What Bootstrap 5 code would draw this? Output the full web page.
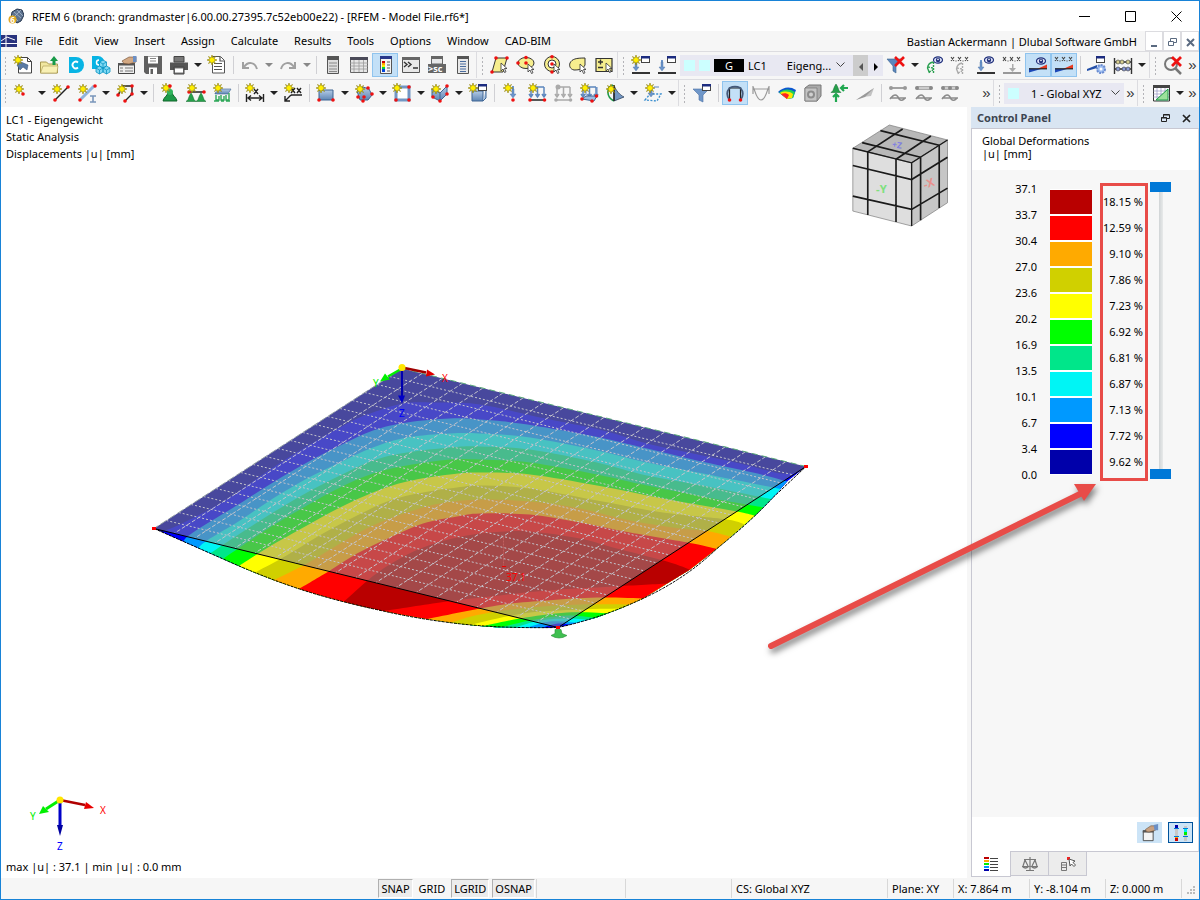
<!DOCTYPE html>
<html lang="en">
<head>
<meta charset="utf-8">
<meta name="viewport" content="width=device-width, initial-scale=1">
<title>RFEM 6</title>
<link href="https://cdn.jsdelivr.net/npm/bootstrap@5.3.0/dist/css/bootstrap.min.css" rel="stylesheet">
<style>
  :root { --edge:#1883d7; --chrome:#f6f6f6; --line:#dcdce0; --frame:#c8c8d2; }
  body { font: 11px/17px "Noto Sans", "Open Sans", sans-serif; color:#000; background:#fff; border:1px solid var(--edge); min-height:100vh; overflow:hidden; }
  button { border:0; background:none; padding:0; color:inherit; line-height:1; }
  a { color:inherit; text-decoration:none; }
  ul { list-style:none; margin:0; padding:0; }
  .titlebar { height:30px; padding-left:7px; }
  .winbtn { width:46px; height:30px; }
  .menubar { height:20px; background:var(--chrome); }
  .menubar .nav-link { padding:0 8px; color:#000; line-height:20px; }
  .mdi { width:18px; height:20px; background:#fff; border:1px solid var(--line); }
  .toolrow { height:28px; background:var(--chrome); border-top:1px solid var(--line); }
  .toolset { height:26px; }
  .toolset + .toolset { border-left:1px solid var(--line); padding-left:1px; }
  .grip { width:9px; height:19px; background:radial-gradient(circle,#b4b4b8 1px,transparent 1px) 0 0/9px 4px; flex:none; }
  .tool { width:26px; height:24px; flex:none; display:flex; align-items:center; justify-content:center; }
  .tool svg { width:20px; height:20px; }
  .tool.active { background:#c3e0f7; box-shadow:inset 0 0 0 1px #90c4ee; }
  .caret { width:12px; height:24px; flex:none; display:flex; align-items:center; justify-content:center; }
  .caret::after { content:""; border:4px solid transparent; border-top-color:#222; border-bottom:0; }
  .caret.dim::after { border-top-color:#888; }
  .vsep { width:1px; height:18px; margin:0 3px; background:#d0d0d4; flex:none; }
  .combo { height:21px; background:#e8e8f2; flex:none; }
  .combo-lc { width:173px; } .combo-cs { width:120px; }
  .combo select { appearance:none; border:0; background:transparent; color:#000; padding:0; height:21px; }
  .chip { width:11px; height:11px; background:#ccffff; }
  .gtag { width:30px; height:13px; line-height:13px; background:#000; color:#fff; text-align:center; }
  .step { width:15px; height:21px; background:#e8e8f2; flex:none; }
  .step.off { background:#cccccc; }
  .more { width:13px; text-align:center; font:15px/20px "Liberation Sans", sans-serif; color:#333; flex:none; }
  .view3d { background:#fff; min-width:0; }
  .scene { width:100%; height:100%; min-height:500px; }
  .caption { left:5px; top:4px; }
  .extrema { left:5px; bottom:3px; }
  .navcube { right:18px; top:17px; width:98px; height:103px; }
  .triad { left:23px; bottom:23px; width:90px; height:64px; }
  .panel { width:232px; flex:none; background:var(--chrome); padding-left:4px; }
  .panelhead { height:21px; background:#d9e5f2; padding-left:6px; font-weight:700; color:#3c4450; }
  .panelbody { border:1px solid var(--frame); border-right-color:#d8d8e0; background:#fff; min-height:0; }
  .paneltitle { height:41px; padding:5px 10px; line-height:13px; }
  .legend { background:#f7f7f7; padding-top:6px; padding-right:27px; }
  .levels li { height:26px; line-height:26px; text-align:right; }
  .shares { border:3px solid #e84c48; padding:3px 2px; width:48px; }
  .shares li { height:26px; line-height:26px; white-space:nowrap; display:flex; justify-content:flex-end; }
  .swatches { margin:0 8px 0 13px; }
  .swatches li { width:42px; height:26px; border-top:1px solid #fff; border-bottom:1px solid #fff; background-clip:padding-box; }
  .span { width:21px; height:297px; margin:0 0 4px 2px; }
  .span input { appearance:none; position:absolute; width:297px; height:21px; left:-138px; top:138px; margin:0; transform:rotate(-90deg); background:none; pointer-events:none; }
  .span input::-webkit-slider-runnable-track { height:21px; background:linear-gradient(#d0d4d6,#e8eaea) center/100% 4px no-repeat; }
  .span input + input::-webkit-slider-runnable-track { background:none; }
  .span input::-webkit-slider-thumb { appearance:none; width:10px; height:21px; background:#0078d7; pointer-events:auto; }
  .panelfoot { height:34px; gap:6px; padding:0 5px 3px 0; }
  .footbtn { width:25px; height:21px; background:#cce4f7; }
  .footbtn.on { border:1px solid #00529b; }
  .tabs { height:26px; }
  .tabs button { width:39px; height:24px; border:1px solid var(--frame); border-top:0; background:#ececec; margin-left:-1px; }
  .tabs button.active { height:26px; background:#fff; margin:-1px 0 0 0; width:40px; }
  .statusbar { height:21px; background:var(--chrome); }
  .statusbar > div { height:19px; border-left:1px solid #d8d8d8; padding-left:4px; line-height:19px; white-space:nowrap; flex:none; }
  .snap { height:19px; padding:0 2px; line-height:16px; border:1px solid transparent; }
  .snap.on { background:#ececec; border-color:#b0b0b0 #fff #fff #b0b0b0; }
  .snaps { gap:3px; margin-right:1px; }
  .w-msg { width:89px; } .w-msg2 { width:106px; } .w-cs { width:156px; } .w-plane { width:66px; } .w-xyz { width:76px; } .w-end { width:18px; }
  .pointer { right:100px; top:373px; width:334px; height:174px; pointer-events:none; filter:drop-shadow(2px 4px 3px rgba(0,0,0,.5)); }
</style>
</head>
<body class="d-flex flex-column">

<svg width="0" height="0" class="position-absolute" aria-hidden="true">
  <defs>
    <linearGradient id="steel" x1="0" y1="0" x2="0" y2="1"><stop offset="0" stop-color="#b4cbe6"/><stop offset="1" stop-color="#5f86b4"/></linearGradient>
    <path id="star" d="M0-5 1-2 3.500-3.500 2-1 5 0 2 1 3.500 3.500 1 2 0 5-1 2-3.500 3.500-2 1-5 0-2-1-3.500-3.500-1-2Z" fill="#ffee00" stroke="#8a7a10" stroke-width=".6"/>
    <circle id="rd" r="1.800" fill="#ee1111"/>
    <path id="cur" d="M0 0v8l2-2 1.500 3.500 1.500-.7L3.500 5.500H6Z" fill="#fff" stroke="#333" stroke-width=".8"/>
    <g id="win"><rect x=".5" y=".5" width="8" height="6" fill="#fff" stroke="#444"/><path d="M0 0h9v2.500H0Z" fill="#1c2c80"/></g>
    <path id="dn" d="M-1-5H1V0H3L0 4-3 0H-1Z" fill="#6c95cb" stroke="#4a6fa5" stroke-width=".4"/>
    <g id="eye"><ellipse rx="4.500" ry="3.200" fill="#dfe4fa" stroke="#20307a" stroke-width="1.200"/><circle r="2.200" fill="#20307a"/><circle r=".8" cy="-.6" fill="#fff"/></g>
    <path id="cone" d="M0-5 1.500-2.500 3 1.500 5 3.500-5 3.500-3 1.500-1.500-2.500Z" fill="#25a04a" stroke="#0e6428" stroke-width=".5"/>
    <g id="bow"><path d="M1 13.500V17.500L13 14Z" fill="#1c48b8"/><path d="M9 14 19 9.500V14Z" fill="#e83a20"/><path d="M1 13.800h18" stroke="#222" stroke-width="1.200"/></g>

    <symbol id="i-new" viewBox="0 0 20 20"><path d="M5.500 2.500h9l4 4V18h-13Z" fill="#fff" stroke="#444"/><path d="M14.500 2.500v4h4" fill="none" stroke="#444"/><path d="M4 10 8 7l7 3-1 5-4-3-3 3Z" fill="#5a7ba5" stroke="#2f4b70" stroke-width=".5"/><use href="#star" x="5" y="5"/></symbol>
    <symbol id="i-open" viewBox="0 0 20 20"><path d="M1.500 7h6l2 2h9v9h-17Z" fill="#f1e7a0" stroke="#a89950"/><path d="M1.500 18 4 11h15l-1 7Z" fill="#f8f0b4" stroke="#a89950" stroke-width=".6"/><path d="M13.500 10V6H11l4-5 4 5h-2.500v4Z" fill="#179a48"/></symbol>
    <symbol id="i-center" viewBox="0 0 20 20"><path d="M4 2h7a8 8 0 0 1 0 16H4Z" fill="#08b4e4"/><path d="M13 7.500a3.300 3.300 0 1 0 0 5" fill="none" stroke="#fff" stroke-width="1.800"/></symbol>
    <symbol id="i-cubes" viewBox="0 0 20 20"><path d="M1 1h6a6 6 0 0 1 0 13H1Z" fill="#08b4e4"/><path d="M8 5a2.500 2.500 0 1 0 0 5" fill="none" stroke="#fff" stroke-width="1.500"/><g fill="#7fd8f2" stroke="#0a94c4" stroke-width=".8"><path d="m12 5 3.500 2v4L12 13 8.500 11V7ZM8.500 11l3.500 2v4l-3.500 2L5 17v-4ZM15.500 11l3.500 2v4l-3.500 2-3.500-2v-4Z"/><path d="m8.500 7 3.500 2 3.500-2M12 9v4M5 13l3.500 2 3.500-2 3.500 2 3.500-2M8.500 15v4M15.500 15v4" fill="none"/></g></symbol>
    <symbol id="i-props" viewBox="0 0 20 20"><path d="M1.500 8.500h16v10h-16Z" fill="#eee" stroke="#444"/><path d="M1 8h17v2.500H1Z" fill="#555"/><path d="M3 13h3m2 0h8M3 16h3m2 0h8" stroke="#777" stroke-width="1.200"/><path d="M5 6 12 2h7v5l-7 2-5-.5Z" fill="#d2a883" stroke="#6e4c33" stroke-width=".6"/><path d="M16 1h3.500v6H16Z" fill="#6b8fc4"/></symbol>
    <symbol id="i-save" viewBox="0 0 20 20"><path d="M1 1h18v18H3l-2-2Z" fill="#606060"/><path d="M5 1.500h10v7H5ZM6 12.500h8V19H6Z" fill="#fff"/><path d="M7 3.500h6M7 6h6" stroke="#888"/><path d="M7.500 14H10v5H7.500Z" fill="#606060"/></symbol>
    <symbol id="i-print" viewBox="0 0 20 20"><path d="M1 7.500h18V15H1Z" fill="#555"/><path d="M5 1.500h10V7H5ZM5 12h10v7H5Z" fill="#777" stroke="#444"/><path d="M6 13.500h8v4H6Z" fill="#fff"/></symbol>
    <symbol id="i-report" viewBox="0 0 20 20"><path d="M5.500 1.500h8l4 4V18h-12Z" fill="#fff" stroke="#555"/><path d="M13 2v4h4M7 8.500h8M7 11.500h8M7 14.500h8" fill="none" stroke="#555" stroke-width="1.200"/><use href="#star" x="5" y="5"/></symbol>
    <symbol id="i-undo" viewBox="0 0 20 20"><path d="M3 7v6h6M4 12c4-6 11-5 13 2" fill="none" stroke="#a0a0a0" stroke-width="2"/></symbol>
    <symbol id="i-redo" viewBox="0 0 20 20"><path d="M17 7v6h-6M16 12C12 6 5 7 3 14" fill="none" stroke="#a0a0a0" stroke-width="2"/></symbol>
    <symbol id="i-list" viewBox="0 0 20 20"><path d="M4.500 1.500h11v17h-11Z" fill="#ddd" stroke="#555"/><path d="M4 1h12v4H4Z" fill="#555"/><path d="M6 8h8M6 11h8M6 14h8M6 16.500h8" stroke="#888"/></symbol>
    <symbol id="i-table" viewBox="0 0 20 20"><path d="M1.500 2.500h17v15h-17Z" fill="#e6e6e6" stroke="#666"/><path d="M1 2h18v3H1Z" fill="#4a4a58"/><path d="M1 8h18M1 11h18M1 14h18M5 5v12M10 5v12M14.500 5v12" stroke="#999" stroke-width=".8"/></symbol>
    <symbol id="i-panel" viewBox="0 0 20 20"><path d="M5.500 1.500h11v17h-11Z" fill="#f4f4f4" stroke="#555"/><path d="M5 1h12v3H5Z" fill="#28388a"/><path d="M7 6h3v2H7Z" fill="#c00"/><path d="M7 8h3v2H7Z" fill="#fa0"/><path d="M7 10h3v2H7Z" fill="#fe0"/><path d="M7 12h3v2H7Z" fill="#0c4"/><path d="M7 14h3v3H7Z" fill="#04d"/><path d="M12 7h3M12 10h3M12 13h3M12 16h3" stroke="#555"/></symbol>
    <symbol id="i-console" viewBox="0 0 20 20"><path d="M1.500 2.500h17v15h-17Z" fill="#e8e8e8" stroke="#555"/><path d="M1 2h18v3H1Z" fill="#666"/><path d="m3 7 3 2.500L3 12m4-5 3 2.500L7 12m5 1h5" fill="none" stroke="#333" stroke-width="1.400"/></symbol>
    <symbol id="i-script" viewBox="0 0 20 20"><path d="M4.500 1.500h11V9h-11Z" fill="#e8e8e8" stroke="#666"/><path d="M4 1h12v3H4ZM1 9h18v9H1Z" fill="#666"/><text x="1" y="16.500" font-size="9" font-weight="700" fill="#fff">&gt;sc</text></symbol>
    <symbol id="i-doc" viewBox="0 0 20 20"><path d="M4.500 1.500h11v17h-11Z" fill="#e8e8e8" stroke="#555"/><path d="M4 1h12v3H4Z" fill="#555"/><path d="M7 6.500h6M7 9h6M7 11.500h6M7 14h6M7 16.500h6" stroke="#4a6da0"/></symbol>
    <symbol id="i-selrh" viewBox="0 0 20 20"><path d="M2 17 6 3h11l-4 14Z" fill="#f6ee8e" stroke="#333"/><g><use href="#rd" x="2" y="17"/><use href="#rd" x="6" y="3"/><use href="#rd" x="17" y="3"/></g><use href="#cur" x="11" y="8"/></symbol>
    <symbol id="i-selel" viewBox="0 0 20 20"><ellipse cx="10" cy="8" rx="8" ry="5.500" fill="#f6ee8e" stroke="#333"/><g><use href="#rd" x="2" y="8"/><use href="#rd" x="10" y="2.500"/><use href="#rd" x="10" y="8"/></g><use href="#cur" x="12" y="9"/></symbol>
    <symbol id="i-selring" viewBox="0 0 20 20"><circle cx="10" cy="9" r="7.500" fill="#f6ee8e" stroke="#333"/><circle cx="10" cy="9" r="4" fill="#fff" stroke="#333"/><g><use href="#rd" x="10" y="9"/><use href="#rd" x="10" y="1.800"/><use href="#rd" x="10" y="17"/></g><use href="#cur" x="12" y="9"/></symbol>
    <symbol id="i-selfree" viewBox="0 0 20 20"><path d="M2 8c2-4 6-5 15-5v7c-2 4-5 5-11 5-4-1-5-4-4-7Z" fill="#f6ee8e" stroke="#333"/><use href="#cur" x="12" y="9"/></symbol>
    <symbol id="i-selpm" viewBox="0 0 20 20"><path d="M2 3.500h16v13H2Z" fill="#f6ee8e" stroke="#333" stroke-width="1.200"/><path d="M4 7h5M6.500 4.500v5M4 12.500h5" stroke="#333" stroke-width="1.400"/><use href="#cur" x="12" y="8"/></symbol>
    <symbol id="i-loadnew" viewBox="0 0 20 20"><path d="M1 18h18" stroke="#333" stroke-width="2"/><use href="#dn" x="5" y="12"/><path d="M5 5v4" stroke="#4a6fa5" stroke-width="2"/><use href="#star" x="5" y="5"/><use href="#win" x="10" y="1"/></symbol>
    <symbol id="i-load" viewBox="0 0 20 20"><path d="M1 18h18" stroke="#333" stroke-width="2"/><path d="M5 5v8" stroke="#6c95cb" stroke-width="2"/><use href="#dn" x="5" y="12"/><use href="#win" x="10" y="1"/></symbol>
    <symbol id="i-nofilter" viewBox="0 0 20 20"><path d="M1 4h15l-6 7v7l-3-2v-5Z" fill="#5b86bd" stroke="#3d648f" stroke-width=".6"/><path d="m9 2 9 9m0-9-9 9" stroke="#ee1111" stroke-width="2.600"/></symbol>
    <g id="sup" fill="none" stroke-width="1.400"><path d="M9 7Q4 8 3.500 13l2 5"/><path d="M9.500 7v11M4 12l5 1M5 17l4-2" stroke-dasharray="2 1"/></g>
    <symbol id="i-eyesup" viewBox="0 0 20 20"><use href="#sup" stroke="#2aa050"/><use href="#eye" x="14" y="5"/></symbol>
    <g id="xxx" stroke="#444" stroke-width="1.100"><path d="m1 2 3 4m0-4-3 4m7-4 3 4m0-4-3 4m7-4 3 4m0-4-3 4M5.500 6h1M12.500 6h1"/></g>
    <symbol id="i-xsup" viewBox="0 0 20 20"><use href="#xxx"/><use href="#sup" x="3" y="1" stroke="#aaa"/></symbol>
    <symbol id="i-eyeload" viewBox="0 0 20 20"><path d="M1 18h18" stroke="#333" stroke-width="2"/><path d="M5 5v8" stroke="#6c95cb" stroke-width="2"/><use href="#dn" x="5" y="12"/><use href="#eye" x="13" y="5"/></symbol>
    <symbol id="i-xload" viewBox="0 0 20 20"><use href="#xxx"/><path d="M1 18h18" stroke="#999" stroke-width="2"/><path d="M10 9v4H7l3.500 4 3.500-4h-2.500V9Z" fill="#aaa"/></symbol>
    <symbol id="i-eyeres" viewBox="0 0 20 20"><use href="#bow"/><use href="#eye" x="13" y="6"/></symbol>
    <symbol id="i-xres" viewBox="0 0 20 20"><use href="#bow"/><use href="#xxx"/></symbol>
    <symbol id="i-resset" viewBox="0 0 20 20"><path d="M0 14 10 10v3L0 16Z" fill="#2450a8"/><use href="#win" x="9" y="1"/><circle cx="14" cy="14" r="4" fill="#9cbcf0" stroke="#6a8cd0" stroke-width="2" stroke-dasharray="2 1"/><circle cx="14" cy="14" r="1.500" fill="#fff"/></symbol>
    <symbol id="i-abacus" viewBox="0 0 20 20"><path d="M1.500 3v16M18.500 3v16M1 7h18M1 14h18" stroke="#333" stroke-width="1.400"/><g fill="#d8cf90" stroke="#333" stroke-width=".6"><circle cx="5" cy="7" r="2"/><circle cx="9" cy="7" r="2"/><circle cx="15" cy="7" r="2"/></g><g fill="#8a9ad8" stroke="#333" stroke-width=".6"><circle cx="5" cy="14" r="2"/><circle cx="11" cy="14" r="2"/><circle cx="15" cy="14" r="2"/></g></symbol>
    <symbol id="i-noview" viewBox="0 0 20 20"><circle cx="8" cy="9" r="6" fill="none" stroke="#777" stroke-width="2"/><path d="m12 13 6 6" stroke="#777" stroke-width="2.500"/><path d="m9 2 9 9m0-9-9 9" stroke="#ee1111" stroke-width="2.800"/></symbol>

    <symbol id="i-node" viewBox="0 0 20 20"><use href="#star" x="6" y="6"/><use href="#rd" x="10" y="11"/></symbol>
    <symbol id="i-line" viewBox="0 0 20 20"><path d="M4 17 17 4" stroke="#222" stroke-width="1.400"/><use href="#rd" x="4" y="17"/><use href="#rd" x="17" y="4"/><use href="#star" x="6" y="6"/></symbol>
    <symbol id="i-member" viewBox="0 0 20 20"><path d="M4 16 17 3" stroke="#8fb4de" stroke-width="3"/><use href="#rd" x="3" y="17"/><use href="#rd" x="18" y="3"/><use href="#star" x="6" y="6"/><path d="M13 13h6M16 13v6M13 19h6" stroke="#7a96bb" stroke-width="1.600"/></symbol>
    <symbol id="i-poly" viewBox="0 0 20 20"><path d="M7 3h10v8l-7 7M5 9l-2 3" fill="none" stroke="#222" stroke-width="1.400"/><use href="#rd" x="17" y="3"/><use href="#rd" x="17" y="11"/><use href="#rd" x="10" y="18"/><use href="#rd" x="3" y="12"/><use href="#star" x="7" y="6"/></symbol>
    <symbol id="i-nsup" viewBox="0 0 20 20"><path d="M3 18c1-4 4-5 5-8h4c1 3 4 4 5 8Z" fill="#1d9a48" stroke="#0e6428"/><circle cx="10" cy="9" r="3" fill="#2fb45c"/><use href="#star" x="6" y="5"/><use href="#rd" x="10" y="3"/></symbol>
    <symbol id="i-lsup" viewBox="0 0 20 20"><use href="#cone" x="5" y="15"/><use href="#cone" x="15" y="15"/><path d="M2 9h16" stroke="#222" stroke-width="1.500"/><use href="#rd" x="3" y="9"/><use href="#rd" x="18" y="9"/><use href="#star" x="6" y="5"/></symbol>
    <symbol id="i-ssup" viewBox="0 0 20 20"><path d="M3 10 8 6h11l-3 5H3Z" fill="url(#steel)" stroke="#3f6593" stroke-width=".6"/><path d="M4 12v5h3v-4M9 12v5h3v-4M14 12v5h3v-7M2 18h5m2 0h3m2 0h4" fill="none" stroke="#2fa85a" stroke-width="1.400"/><use href="#star" x="6" y="5"/></symbol>
    <symbol id="i-dim" viewBox="0 0 20 20"><path d="M1.500 11v8M18.500 11v8M3 15h14M6 12.500 3 15l3 2.500M14 12.500l3 2.500-3 2.500M9 6l4 5m0-5-4 5" fill="none" stroke="#222" stroke-width="1.400"/><use href="#star" x="5" y="5"/></symbol>
    <symbol id="i-dimxx" viewBox="0 0 20 20"><path d="M8 12h11M8 12l-6 6m0-5v5h5M8 5l4 5m0-5-4 5m6-5 4 5m0-5-4 5" fill="none" stroke="#222" stroke-width="1.400"/><use href="#star" x="6" y="5"/></symbol>
    <symbol id="i-surf" viewBox="0 0 20 20"><path d="M3 7h14v10H3Z" fill="url(#steel)" stroke="#3f6593"/><use href="#rd" x="3" y="17"/><use href="#rd" x="17" y="17"/><use href="#star" x="5" y="5"/></symbol>
    <symbol id="i-solid" viewBox="0 0 20 20"><path d="M3 8 9 4l6 2 3 6-4 5H6Z" fill="url(#steel)" stroke="#3f6593"/><use href="#rd" x="14" y="5"/><use href="#rd" x="18" y="11"/><use href="#rd" x="10" y="14"/><use href="#rd" x="4" y="14"/><use href="#rd" x="9" y="18"/><use href="#star" x="6" y="6"/></symbol>
    <symbol id="i-opening" viewBox="0 0 20 20"><path d="M4 4h13v13H4Z" fill="#fff" stroke="#7397c4" stroke-width="3"/><use href="#rd" x="17" y="4"/><use href="#rd" x="17" y="17"/><use href="#rd" x="4" y="17"/><use href="#star" x="5" y="5"/></symbol>
    <symbol id="i-fold" viewBox="0 0 20 20"><path d="M2 6 10 10l7-7v8l-7 7-8-4Z" fill="url(#steel)" stroke="#3f6593"/><path d="M10 10v8" stroke="#3f6593"/><use href="#rd" x="17" y="3"/><use href="#rd" x="17" y="11"/><use href="#rd" x="10" y="18"/><use href="#rd" x="3" y="14"/><use href="#star" x="6" y="6"/></symbol>
    <symbol id="i-box" viewBox="0 0 20 20"><path d="M4 8h11v10H4Z" fill="url(#steel)" stroke="#3f6593"/><path d="m4 8 3-3h11l-3 3m0 10 3-3V6" fill="#a8c4e4" stroke="#3f6593"/><use href="#win" x="10" y="1"/><use href="#star" x="5" y="5"/></symbol>
    <symbol id="i-nload" viewBox="0 0 20 20"><path d="M12 3v8" stroke="#6c95cb" stroke-width="2"/><use href="#dn" x="12" y="11"/><use href="#rd" x="12" y="17"/><use href="#star" x="7" y="5"/></symbol>
    <g id="pins"><path d="M4 4h13M4 4v8m6.500-8v8M17 4v8M2 11l2 3 2-3m2.500 0 2 3 2-3m2.500 0 2 3 2-3" fill="none" stroke-width="1.500"/></g>
    <symbol id="i-mload" viewBox="0 0 20 20"><use href="#pins" stroke="#5c86bd"/><path d="M3 17h15" stroke="#222" stroke-width="1.500"/><use href="#rd" x="3" y="17"/><use href="#rd" x="17.500" y="17"/><use href="#star" x="6" y="5"/></symbol>
    <symbol id="i-gload" viewBox="0 0 20 20"><use href="#pins" stroke="#aaa"/><path d="M3 17h15" stroke="#aaa" stroke-width="1.500"/><g fill="#aaa"><circle cx="3" cy="17" r="1.800"/><circle cx="17.500" cy="17" r="1.800"/><circle cx="5" cy="4" r="2.500"/></g></symbol>
    <symbol id="i-sload" viewBox="0 0 20 20"><use href="#pins" stroke="#5c86bd"/><path d="M3 16 7 13h11l-3 5Z" fill="#9bbbe0" stroke="#3f6593"/><path d="M7 4v8m11-8v9" stroke="#5c86bd"/><use href="#rd" x="3" y="16"/><use href="#rd" x="17.500" y="13"/><use href="#rd" x="13" y="18"/><use href="#star" x="6" y="5"/></symbol>
    <symbol id="i-imp" viewBox="0 0 20 20"><path d="M8 2C1 4 1 14 9 18" fill="none" stroke="#1d9a48" stroke-width="1.600"/><path d="M9 2v16l10-4c-4-2-8-6-10-12Z" fill="#7397c4" stroke="#2d4260" stroke-width=".8"/><path d="M9 2v16" stroke="#222" stroke-width="1.500"/><use href="#star" x="6" y="6"/></symbol>
    <symbol id="i-free" viewBox="0 0 20 20"><path d="M2 17 7 11h11l-4 7Z" fill="none" stroke="#3b8fd0" stroke-width="1.300" stroke-dasharray="2 1.500"/><use href="#dn" x="8" y="10"/><use href="#star" x="7" y="5"/><path d="M11 4h5" stroke="#5c86bd"/></symbol>
    <symbol id="i-filter" viewBox="0 0 20 20"><path d="M1 6h16l-6 6v7l-4-2v-5Z" fill="#6f97c9" stroke="#4a6fa5" stroke-width=".6"/><use href="#win" x="10" y="1"/></symbol>
    <symbol id="i-deform" viewBox="0 0 20 20"><path d="M4.500 17V5h11v12" fill="none" stroke="#222" stroke-width="1.200"/><path d="M4.500 17C1 12 2 8 4.500 5c4-2 7-2 11 0C18 8 19 12 15.500 17" fill="none" stroke="#44597a" stroke-width="1.800"/><use href="#rd" x="4.500" y="17"/><use href="#rd" x="15.500" y="17"/></symbol>
    <symbol id="i-moment" viewBox="0 0 20 20"><path d="M2 3v8M18 3v8M2 6h16M2 4c2 2 3 13 8 13s6-11 8-13" fill="none" stroke="#999" stroke-width="1.200"/></symbol>
    <symbol id="i-iso" viewBox="0 0 20 20"><path d="M1 9C6 4 13 3 19 7l-3 8-6 1Z" fill="#0b57d0"/><path d="M2 9.500C7 6 12 5 18 9l-2 6-6 1Z" fill="#1fcf5a"/><path d="M3 10c4-2 9-2 13 1l-1 4-5 1Z" fill="#ffe600"/><path d="M4 11c3-1 6-1 8 1l-2 4Z" fill="#f22"/></symbol>
    <symbol id="i-cubeg" viewBox="0 0 20 20"><path d="m2 5 4-3h12v11l-4 5H2Z" fill="#aaa" stroke="#777"/><path d="M2 5h12v13H2Z" fill="#c4c4c4" stroke="#777" stroke-width=".7"/><circle cx="8" cy="11.500" r="4" fill="#8c8c8c"/><circle cx="8" cy="11.500" r="2" fill="#d0d0d0"/></symbol>
    <symbol id="i-react" viewBox="0 0 20 20"><use href="#cone" x="7" y="6"/><path d="M12 5h7M15 2l-3 3 3 3M7 19v-7M4 14l3-3 3 3" fill="none" stroke="#20a850" stroke-width="2.200"/></symbol>
    <symbol id="i-knife" viewBox="0 0 20 20"><path d="M1 17 19 5l-3 8-8 1Z" fill="#c2c2c2"/><path d="M1 17 19 5l-9 9Z" fill="#999"/></symbol>
    <g id="wave" fill="none" stroke="#8c8c8c" stroke-width="1.600"><path d="M2 15h16M2 16q6-8 9 0 3 3 6-1"/></g>
    <symbol id="i-w1" viewBox="0 0 20 20"><path d="M3 5h14" stroke="#8c8c8c" stroke-width="1.600"/><circle cx="3" cy="5" r="2" fill="#999"/><circle cx="17" cy="5" r="2" fill="#999"/><use href="#wave"/></symbol>
    <symbol id="i-w2" viewBox="0 0 20 20"><path d="M3 3.500h14v3H3Z" fill="#ccc" stroke="#aaa"/><circle cx="3" cy="5" r="2" fill="#888"/><circle cx="17" cy="5" r="2" fill="#888"/><use href="#wave"/></symbol>
    <symbol id="i-w3" viewBox="0 0 20 20"><path d="M3 3.500h14v3H3Z" fill="#ccc" stroke="#aaa"/><g fill="#888"><circle cx="3" cy="5" r="2"/><circle cx="10" cy="5" r="2"/><circle cx="17" cy="5" r="2"/></g><use href="#wave"/></symbol>
    <symbol id="i-plane" viewBox="0 0 20 20"><path d="M2.500 3h16v15h-16Z" fill="#fff" stroke="#333"/><path d="M2 2h17v3H2Z" fill="#444"/><path d="M2 8h16M2 11h16M2 14h16M6 5v13M10 5v13M14 5v13" stroke="#88b" stroke-width=".6"/><path d="M5 17 17 6v11Z" fill="#9be29b" stroke="#1d9a48"/></symbol>
  </defs>
</svg>

<header class="titlebar d-flex align-items-center">
  <svg width="16" height="16" viewBox="0 0 16 16" aria-hidden="true"><path d="M4 4 9 1l5 1 2 5-3 6-4 2-6-5Z" fill="#5d7390" stroke="#24344c"/><path d="m6 4 7 6M9 2l6 6M4 7l6 6M13 2 5 10" stroke="#a8b8cc" stroke-width=".8"/><circle cx="4.500" cy="11.500" r="4" fill="#e0a820"/><text x="2.300" y="14.500" font-size="8" font-weight="700" fill="#fff">6</text></svg>
  <span class="ms-2">RFEM 6 (branch: grandmaster|6.00.00.27395.7c52eb00e22) - [RFEM - Model File.rf6*]</span>
  <div class="ms-auto d-flex">
    <button class="winbtn" aria-label="Minimize"><svg width="11" height="11" viewBox="0 0 11 11"><path d="M0 5.500h11" stroke="#000"/></svg></button>
    <button class="winbtn" aria-label="Maximize"><svg width="11" height="11" viewBox="0 0 11 11"><path d="M.5.5h10v10H.5Z" fill="none" stroke="#000"/></svg></button>
    <button class="winbtn" aria-label="Close"><svg width="11" height="11" viewBox="0 0 11 11"><path d="m.5.5 10 10m0-10-10 10" stroke="#000"/></svg></button>
  </div>
</header>

<nav class="menubar d-flex align-items-center">
  <svg width="16" height="12" viewBox="0 0 16 12" aria-hidden="true"><path d="M0 0h16v12H0Z" fill="#29337e"/><path d="M0 6 6 2l8 3M5 0v12M0 8.500h16" fill="none" stroke="#fff"/></svg>
  <ul class="nav flex-nowrap">
    <li><a class="nav-link" href="#">File</a></li><li><a class="nav-link" href="#">Edit</a></li><li><a class="nav-link" href="#">View</a></li><li><a class="nav-link" href="#">Insert</a></li><li><a class="nav-link" href="#">Assign</a></li><li><a class="nav-link" href="#">Calculate</a></li><li><a class="nav-link" href="#">Results</a></li><li><a class="nav-link" href="#">Tools</a></li><li><a class="nav-link" href="#">Options</a></li><li><a class="nav-link" href="#">Window</a></li><li><a class="nav-link" href="#">CAD-BIM</a></li>
  </ul>
  <span class="ms-auto me-2">Bastian Ackermann | Dlubal Software GmbH</span>
  <button class="mdi" aria-label="Minimize document"><svg width="8" height="8" viewBox="0 0 8 8"><path d="M1 7h6" stroke="#5a6a80" stroke-width="2"/></svg></button>
  <button class="mdi" aria-label="Restore document"><svg width="9" height="9" viewBox="0 0 9 9"><path d="M2.500 3V.5h6v4H6M.5 3.500h5v4h-5Z" fill="none" stroke="#5a6a80"/></svg></button>
  <button class="mdi" aria-label="Close document"><svg width="9" height="9" viewBox="0 0 9 9"><path d="m1 1 7 7m0-7L1 8" stroke="#5a6a80" stroke-width="2"/></svg></button>
</nav>

<div class="toolrow d-flex" role="toolbar" aria-label="Main tools">
  <div class="toolset d-flex align-items-center">
    <span class="grip"></span>
    <button class="tool" aria-label="New"><svg><use href="#i-new"/></svg></button><button class="tool" aria-label="Open"><svg><use href="#i-open"/></svg></button><button class="tool" aria-label="Dlubal Center"><svg><use href="#i-center"/></svg></button><button class="tool" aria-label="Block manager"><svg><use href="#i-cubes"/></svg></button><button class="tool" aria-label="Model data"><svg><use href="#i-props"/></svg></button><button class="tool" aria-label="Save"><svg><use href="#i-save"/></svg></button><button class="tool" aria-label="Print"><svg><use href="#i-print"/></svg></button><button class="caret" aria-label="Print options"></button><button class="tool" aria-label="New report"><svg><use href="#i-report"/></svg></button>
    <span class="vsep"></span>
    <button class="tool" aria-label="Undo"><svg><use href="#i-undo"/></svg></button><button class="caret dim" aria-label="Undo list"></button><button class="tool" aria-label="Redo"><svg><use href="#i-redo"/></svg></button><button class="caret dim" aria-label="Redo list"></button>
    <span class="vsep"></span>
    <button class="tool" aria-label="Navigator"><svg><use href="#i-list"/></svg></button><button class="tool" aria-label="Tables"><svg><use href="#i-table"/></svg></button><button class="tool active" aria-label="Control panel"><svg><use href="#i-panel"/></svg></button><button class="tool" aria-label="Console"><svg><use href="#i-console"/></svg></button><button class="tool" aria-label="Scripts"><svg><use href="#i-script"/></svg></button><button class="tool" aria-label="Log"><svg><use href="#i-doc"/></svg></button>
  </div>
  <div class="toolset d-flex align-items-center">
    <span class="grip"></span>
    <button class="tool" aria-label="Select by rhomboid"><svg><use href="#i-selrh"/></svg></button><button class="tool" aria-label="Select by ellipse"><svg><use href="#i-selel"/></svg></button><button class="tool" aria-label="Select by ring"><svg><use href="#i-selring"/></svg></button><button class="tool" aria-label="Select freehand"><svg><use href="#i-selfree"/></svg></button><button class="tool" aria-label="Add or remove selection"><svg><use href="#i-selpm"/></svg></button>
  </div>
  <div class="toolset d-flex align-items-center flex-grow-1">
    <span class="grip"></span>
    <button class="tool" aria-label="New load case"><svg><use href="#i-loadnew"/></svg></button><button class="tool" aria-label="Load cases"><svg><use href="#i-load"/></svg></button>
    <div class="combo combo-lc d-flex align-items-center ps-1">
      <span class="chip me-1"></span><span class="chip me-1"></span><span class="gtag me-1">G</span><span class="me-3">LC1</span>
      <select class="ms-1" aria-label="Load case"><option>Eigeng...</option></select>
      <svg class="ms-auto me-2" width="9" height="6" viewBox="0 0 9 6"><path d="m.5.5 4 4 4-4" fill="none" stroke="#444"/></svg>
    </div>
    <button class="step off" aria-label="Previous"><svg width="4" height="8" viewBox="0 0 4 8"><path d="M4 0v8L0 4Z" fill="#555"/></svg></button><button class="step" aria-label="Next"><svg width="4" height="8" viewBox="0 0 4 8"><path d="M0 0v8l4-4Z"/></svg></button>
    <button class="tool" aria-label="Remove filter"><svg><use href="#i-nofilter"/></svg></button><button class="caret" aria-label="Filter options"></button><button class="tool" aria-label="Show supports"><svg><use href="#i-eyesup"/></svg></button><button class="tool" aria-label="Support values"><svg><use href="#i-xsup"/></svg></button><button class="tool" aria-label="Show loads"><svg><use href="#i-eyeload"/></svg></button><button class="tool" aria-label="Load values"><svg><use href="#i-xload"/></svg></button><button class="tool active" aria-label="Show results"><svg><use href="#i-eyeres"/></svg></button><button class="tool active" aria-label="Result values"><svg><use href="#i-xres"/></svg></button>
    <span class="vsep"></span>
    <button class="tool" aria-label="Result settings"><svg><use href="#i-resset"/></svg></button><button class="tool" aria-label="Calculate"><svg><use href="#i-abacus"/></svg></button><button class="caret" aria-label="Calculate options"></button>
  </div>
  <div class="toolset d-flex align-items-center">
    <span class="grip"></span><button class="tool" aria-label="Reset zoom"><svg><use href="#i-noview"/></svg></button><button class="more" aria-label="More tools">»</button>
  </div>
</div>

<div class="toolrow d-flex" role="toolbar" aria-label="Modelling tools">
  <div class="toolset d-flex align-items-center">
    <span class="grip"></span>
    <button class="tool" aria-label="New node"><svg><use href="#i-node"/></svg></button><button class="caret" aria-label="Node types"></button><button class="tool" aria-label="New line"><svg><use href="#i-line"/></svg></button><button class="tool" aria-label="New member"><svg><use href="#i-member"/></svg></button><button class="caret" aria-label="Member types"></button><button class="tool" aria-label="New polyline"><svg><use href="#i-poly"/></svg></button><button class="caret" aria-label="Polyline types"></button>
    <span class="vsep"></span>
    <button class="tool" aria-label="Nodal support"><svg><use href="#i-nsup"/></svg></button><button class="tool" aria-label="Line support"><svg><use href="#i-lsup"/></svg></button><button class="tool" aria-label="Surface support"><svg><use href="#i-ssup"/></svg></button>
    <span class="vsep"></span>
    <button class="tool" aria-label="Dimension"><svg><use href="#i-dim"/></svg></button><button class="caret" aria-label="Dimension types"></button><button class="tool" aria-label="Note"><svg><use href="#i-dimxx"/></svg></button>
    <span class="vsep"></span>
    <button class="tool" aria-label="New surface"><svg><use href="#i-surf"/></svg></button><button class="caret" aria-label="Surface types"></button><button class="tool" aria-label="New solid"><svg><use href="#i-solid"/></svg></button><button class="caret" aria-label="Solid types"></button><button class="tool" aria-label="New opening"><svg><use href="#i-opening"/></svg></button><button class="caret" aria-label="Opening types"></button><button class="tool" aria-label="New folded surface"><svg><use href="#i-fold"/></svg></button><button class="caret" aria-label="Folded types"></button><button class="tool" aria-label="New block"><svg><use href="#i-box"/></svg></button>
    <span class="vsep"></span>
    <button class="tool" aria-label="Nodal load"><svg><use href="#i-nload"/></svg></button><button class="tool" aria-label="Member load"><svg><use href="#i-mload"/></svg></button><button class="tool" aria-label="Line load"><svg><use href="#i-gload"/></svg></button><button class="tool" aria-label="Surface load"><svg><use href="#i-sload"/></svg></button><button class="tool" aria-label="Imperfection"><svg><use href="#i-imp"/></svg></button><button class="caret" aria-label="Imperfection types"></button><button class="tool" aria-label="Free load"><svg><use href="#i-free"/></svg></button><button class="caret" aria-label="Free load types"></button>
  </div>
  <div class="toolset d-flex align-items-center flex-grow-1">
    <span class="grip"></span>
    <button class="tool" aria-label="Filter"><svg><use href="#i-filter"/></svg></button>
    <span class="vsep"></span>
    <button class="tool active" aria-label="Deformations"><svg><use href="#i-deform"/></svg></button><button class="tool" aria-label="Line results"><svg><use href="#i-moment"/></svg></button><button class="tool" aria-label="Surface results"><svg><use href="#i-iso"/></svg></button><button class="tool" aria-label="Solid results"><svg><use href="#i-cubeg"/></svg></button><button class="tool" aria-label="Reactions"><svg><use href="#i-react"/></svg></button><button class="tool" aria-label="Sections"><svg><use href="#i-knife"/></svg></button>
    <span class="vsep"></span>
    <button class="tool" aria-label="Diagram on line"><svg><use href="#i-w1"/></svg></button><button class="tool" aria-label="Diagram on member"><svg><use href="#i-w2"/></svg></button><button class="tool" aria-label="Diagram on set"><svg><use href="#i-w3"/></svg></button>
    <button class="more ms-auto" aria-label="More results">»</button>
  </div>
  <div class="toolset d-flex align-items-center">
    <span class="grip"></span>
    <div class="combo combo-cs d-flex align-items-center ps-1">
      <span class="chip me-2"></span>
      <select class="ms-1" aria-label="Coordinate system"><option>1 - Global XYZ</option></select>
      <svg class="ms-auto me-1" width="9" height="6" viewBox="0 0 9 6"><path d="m.5.5 4 4 4-4" fill="none" stroke="#444"/></svg>
    </div>
    <button class="more" aria-label="More systems">»</button>
  </div>
  <div class="toolset d-flex align-items-center">
    <span class="grip"></span><button class="tool" aria-label="Work plane"><svg><use href="#i-plane"/></svg></button><button class="caret" aria-label="Work plane options"></button><button class="more" aria-label="More planes">»</button>
  </div>
</div>

<main class="d-flex flex-grow-1 position-relative">
  <section class="view3d flex-grow-1 position-relative overflow-hidden">
    <svg class="scene d-block" viewBox="1 107 966 770" font-size="10">
      <clipPath id="plate"><path d="M402 368 806 466 788 480 772 498 755 515 732 535 717 548 690 569 667 583 643 598 623 607 597 617 558 627Q500 629 457 623T381 610Q335 600 298 588T222 558L154 528Z"/></clipPath>
      <g id="bands" clip-path="url(#plate)"><path d="M402 368 806 466V660H154V528Z" fill="#0000aa"/></g>
      <path d="M402 368 806 466 558 627 154 528Z" fill="#909090" fill-opacity=".5"/>
      <g id="grid" fill="none" stroke="#c4c4cc"></g>
      <path d="M402 368 806 466" stroke="#58a878" stroke-dasharray="6 4" fill="none"/>
      <path d="M402 368 154 528" stroke="#8c98a0" stroke-dasharray="8 2" fill="none"/>
      <path d="M154 528 558 627 806 466" fill="none" stroke="#000"/>
      <path d="M154 528 222 558Q262 576 298 588T381 610Q415 618 457 623T558 627Q600 618 643 598T717 548Q752 520 772 498L806 466" fill="none" stroke="#000" stroke-dasharray="3 1"/>
      <path d="M503.500 537v28" stroke="#c06060" stroke-dasharray="2 1"/><path d="M502 566h4" stroke="#e00"/>
      <text x="506" y="580" fill="#f00">37.1</text>
      <path d="M555 629h6l1 4 5 2q-8 5-16 0l4-2Z" fill="#3fc050" stroke="#2a9038" stroke-width=".6"/>
      <g fill="#f00"><path d="M152 526.500h4v3h-4ZM556 625.500h4v3h-4ZM804 464.500h4v3h-4Z"/></g>
      <path d="M402 368 388 376" stroke="#00f000" stroke-width="2.500"/><path d="m380 381 5-8 5 6Z" fill="#00f000"/>
      <path d="m402 367 24 5" stroke="#a00000" stroke-width="2.500"/><path d="m435 374-9 2 1-7Z" fill="#e00000"/>
      <path d="M402 368v28" stroke="#0000b0" stroke-width="2"/><path d="m402 403-4-8h7Z" fill="#0000c8"/>
      <circle cx="402" cy="367" r="3.500" fill="#ffe600"/>
      <text x="373" y="386" fill="#0e0">Y</text><text x="442" y="381" fill="#f00">X</text><text x="399" y="416" fill="#00f">Z</text>
    </svg>
    <div class="caption position-absolute">LC1 - Eigengewicht<br>Static Analysis<br>Displacements |u| [mm]</div>
    <svg class="navcube position-absolute" viewBox="17 15 290 310" font-weight="700" font-size="34">
      <g stroke="#777" stroke-width="2"><path d="m20 88 110-70 175 45-108 69Z" fill="#b8b8b8"/><path d="m20 88 177 44v190L20 277Z" fill="#dedede"/><path d="m197 132 108-69v189l-108 70Z" fill="#c6c6c6"/></g>
      <path d="m20 140 177 42 108-67M20 232l177 40 108-64M65 97v192M150 120v190M224 115v190M280 78v190M65 99 170 30M150 121 255 51M48 71l176 44M103 35l177 44" fill="none" stroke="#1a1a1a" stroke-width="5"/>
      <path d="m20 88 177 44 108-69M197 132v190" fill="none" stroke="#1a1a1a" stroke-width="4"/>
      <text x="90" y="222" fill="#7fe07f">-Y</text><text x="232" y="206" fill="#e8908c" transform="rotate(-20 248 194)">-X</text><text x="138" y="88" font-size="26" fill="#8080e0" transform="rotate(8 158 80)">+Z</text>
    </svg>
    <svg class="triad position-absolute" viewBox="24 791 90 64" font-size="10">
      <path d="m60 800-14 9" stroke="#00f000" stroke-width="3"/><path d="m39 814 4-8 6 6Z" fill="#00f000"/>
      <path d="m60 800 25 5" stroke="#b00000" stroke-width="2.500"/><path d="m94 808-10 1 2-7Z" fill="#e80000"/>
      <path d="M60 801v25" stroke="#0000c8" stroke-width="3"/><path d="m60 836-3-11h6Z" fill="#0000a0"/><circle cx="60" cy="800" r="3.500" fill="#ffe600"/>
      <text x="30" y="820" fill="#0e0">Y</text><text x="100" y="814" fill="#f00">X</text><text x="57" y="850" fill="#00f">Z</text>
    </svg>
    <div class="extrema position-absolute">max |u| : 37.1 | min |u| : 0.0 mm</div>
  </section>

  <aside class="panel d-flex flex-column">
    <div class="panelhead d-flex align-items-center">Control Panel
      <button class="ms-auto me-1" aria-label="Undock"><svg width="9" height="9" viewBox="0 0 9 9"><path d="M2.500 3V.5h6v4H6M.5 3.500h5v4h-5ZM2 1h6M0 4h6" fill="none" stroke="#222"/></svg></button>
      <button class="ms-2 me-2" aria-label="Close panel"><svg width="9" height="9" viewBox="0 0 9 9"><path d="m1 1 7 7m0-7L1 8" stroke="#222" stroke-width="1.700"/></svg></button>
    </div>
    <div class="panelbody flex-grow-1 d-flex flex-column">
      <div class="paneltitle">Global Deformations<br>|u| [mm]</div>
      <div class="legend flex-grow-1">
        <div class="d-flex justify-content-end align-items-center">
          <ul class="levels"><li>37.1</li><li>33.7</li><li>30.4</li><li>27.0</li><li>23.6</li><li>20.2</li><li>16.9</li><li>13.5</li><li>10.1</li><li>6.7</li><li>3.4</li><li>0.0</li></ul>
          <ul class="swatches" id="swatches"></ul>
          <ul class="shares"><li>18.15 %</li><li>12.59 %</li><li>9.10 %</li><li>7.86 %</li><li>7.23 %</li><li>6.92 %</li><li>6.81 %</li><li>6.87 %</li><li>7.13 %</li><li>7.72 %</li><li>9.62 %</li></ul>
          <div class="span position-relative"><input type="range" value="0" aria-label="Lower limit"><input type="range" value="100" aria-label="Upper limit"></div>
        </div>
      </div>
      <div class="panelfoot d-flex align-items-center justify-content-end">
        <button class="footbtn" aria-label="Panel options"><svg width="18" height="18" viewBox="0 0 20 20"><path d="M2.500 7.500h11v11h-11Z" fill="#f4f4f4" stroke="#444"/><path d="M2 7h12v2.500H2Z" fill="#555"/><path d="M5 6 11 2h5v5l-7 2-3-.5Z" fill="#c8a080" stroke="#5e4630" stroke-width=".6"/><path d="m14 1 5-1v7h-4Z" fill="#6b8fc4"/></svg></button>
        <button class="footbtn on" aria-label="Colour range"><svg width="18" height="18" viewBox="0 0 18 18"><path d="M3 2h3v15H3ZM12 2h3v15h-3Z" fill="#c8c8c8"/><path d="M3 1h3v3H3Z" fill="#00a"/><path d="M3 12h3v2H3Z" fill="#fa0"/><path d="M3 14h3v3H3Z" fill="#c00"/><path d="M12 5h3v3h-3Z" fill="#0ee"/><path d="M12 8h3v3h-3Z" fill="#0e0"/><path d="M2 4.500h5M2 12.500h5M11 4.500h5M11 12.500h5" stroke="#0078d7" stroke-width="1.200"/></svg></button>
      </div>
    </div>
    <div class="tabs d-flex" role="tablist">
      <button class="active" role="tab" aria-label="Colours"><svg width="14" height="14" viewBox="0 0 14 14"><path d="M0 0h5v2H0Z" fill="#b00"/><path d="M0 3h5v2H0Z" fill="#fa0"/><path d="M0 6h5v2H0Z" fill="#0e0"/><path d="M0 9h5v2H0Z" fill="#09f"/><path d="M0 12h5v2H0Z" fill="#00a"/><path d="M6 1.500h8M6 4.500h8M6 7.500h8M6 10.500h8M6 13.500h8" stroke="#444"/></svg></button>
      <button role="tab" aria-label="Factors"><svg width="16" height="16" viewBox="0 0 16 16"><path d="M8 1v13M4 14.500h8M2 3.500h12M3 4 1 10M3 4l3 6M13 4l-3 6M13 4l2 6M.5 10.500h6q-3 3-6 0ZM9.500 10.500h6q-3 3-6 0Z" fill="none" stroke="#777" stroke-width="1.200"/></svg></button>
      <button role="tab" aria-label="Filter"><svg width="16" height="16" viewBox="0 0 16 16"><path d="M1.500 6.500h5v8h-5ZM2 9h4M2 11.500h4" fill="none" stroke="#777"/><path d="M7 1h3v3H7Z" fill="#e22"/><path d="m9 3 6 2-2 1.500 2.500 2.500-1.500 1.500L11.500 8 10 10Z" fill="#fff" stroke="#555"/></svg></button>
    </div>
  </aside>

  <svg class="pointer position-absolute" viewBox="765 480 334 174" aria-hidden="true"><path d="M771 646 1082 493" stroke="#e84c48" stroke-width="6" stroke-linecap="round"/><path d="M1096 484h-22l10 17Z" fill="#e84c48"/></svg>
</main>

<footer class="statusbar d-flex align-items-center">
  <span class="snaps d-flex flex-grow-1 justify-content-end"><button class="snap on">SNAP</button><button class="snap">GRID</button><button class="snap on">LGRID</button><button class="snap on">OSNAP</button></span>
  <div class="w-msg"></div><div class="w-msg2"></div><div class="w-cs">CS: Global XYZ</div><div class="w-plane">Plane: XY</div><div class="w-xyz">X: 7.864 m</div><div class="w-xyz">Y: -8.104 m</div><div class="w-xyz">Z: 0.000 m</div>
  <div class="w-end"><svg width="10" height="10" viewBox="0 0 10 10"><path d="M7 1h2v2H7ZM4 4h2v2H4ZM7 4h2v2H7ZM1 7h2v2H1ZM4 7h2v2H4ZM7 7h2v2H7Z" fill="#bbb"/></svg></div>
</footer>

<script src="https://cdn.jsdelivr.net/npm/bootstrap@5.3.0/dist/js/bootstrap.bundle.min.js"></script>
<script>
  const colors = ['#b90000','#ff0000','#ffaa00','#d0d000','#ffff00','#00ff00','#00e68a','#00f5f5','#0099ff','#0000ff','#0000aa'];
  document.getElementById('swatches').innerHTML = colors.map(c => `<li style="background-color:${c}"></li>`).join('');

  // Contour lines: upper branch left to right, then lower branch right to left.
  const contours = [
    [[[163,531],[182,523],[220,503],[257,478],[287,458],[317,440],[353,420],[373,412],[403,403],[433,402],[480,404],[540,417],[603,430],[647,443],[693,453],[740,463],[780,473],[800,471]], [[566,626],[560,625],[550,628]]],
    [[[183,541],[193,532],[240,503],[273,482],[307,462],[340,445],[373,430],[407,422],[450,418],[480,419],[520,423],[590,435],[647,448],[697,460],[753,472],[788,481]], [[574,625],[558,623],[540,628]]],
    [[[198,548],[207,540],[240,520],[273,498],[307,478],[340,462],[373,447],[407,437],[450,433],[480,433],[530,437],[597,450],[647,462],[713,475],[783,489]], [[582,623],[550,621],[525,628]]],
    [[[210,553],[240,533],[273,512],[307,492],[340,475],[373,460],[407,452],[450,447],[480,446],[530,449],[597,462],[647,475],[713,487],[773,499]], [[592,620],[570,618],[540,620],[512,628]]],
    [[[222,559],[250,540],[273,525],[307,505],[340,487],[373,473],[407,465],[450,459],[480,459],[530,462],[597,474],[647,485],[713,498],[764,507]], [[599,618],[567,615],[530,620],[500,627]]],
    [[[238,566],[268,547],[307,525],[340,507],[373,492],[407,481],[450,474],[480,472],[530,474],[597,485],[663,498],[737,511],[757,516]], [[612,613],[567,612],[520,618],[482,626]]],
    [[[255,572],[283,557],[323,533],[357,515],[390,500],[423,492],[457,487],[480,485],[530,488],[597,500],[663,512],[727,519],[747,525]], [[625,608],[580,609],[523,613],[468,625]]],
    [[[273,580],[307,563],[340,543],[373,525],[407,512],[440,503],[480,499],[530,501],[580,508],[630,520],[680,528],[710,531],[733,537]], [[635,604],[580,604],[530,607],[480,614],[448,623]]],
    [[[298,589],[330,570],[357,553],[390,537],[423,523],[457,516],[480,513],[530,514],[580,522],[630,532],[693,543],[719,549]], [[646,598],[597,597],[547,600],[497,605],[425,619]]],
    [[[343,602],[370,578],[393,562],[423,547],[457,537],[490,532],[530,531],[580,538],[613,547],[667,561],[692,570]], [[669,583],[613,586],[547,590],[490,596],[440,602],[381,611]]]
  ];
  // Catmull-Rom curve through the points, as cubic segments.
  const smooth = p => p.slice(1).map((q, i) => {
    const a = p[Math.max(i - 1, 0)], b = p[i], d = p[Math.min(i + 2, p.length - 1)];
    return `C${b[0] + (q[0] - a[0]) / 6} ${b[1] + (q[1] - a[1]) / 6} ${q[0] - (d[0] - b[0]) / 6} ${q[1] - (d[1] - b[1]) / 6} ${q}`;
  }).join('');
  document.getElementById('bands').innerHTML += contours.map(([up, low], i) =>
    `<path fill="${colors[9 - i]}" d="M${up[0]}${smooth(up)}L800 650 ${low[0]}${smooth(low)}L250 700Z"/>`).join('');

  // 20 x 20 line grid over the undeformed plate.
  let g = '';
  for (let i = 1; i < 20; i++) {
    const t = i / 20;
    g += `<path stroke-dasharray="4 2" d="M${402 + 404 * t} ${368 + 98 * t}l-248 160"/>`;
    g += `<path stroke-dasharray="2 2" d="M${402 - 248 * t} ${368 + 160 * t}l404 98.500"/>`;
  }
  document.getElementById('grid').innerHTML = g;
</script>
</body>
</html>
